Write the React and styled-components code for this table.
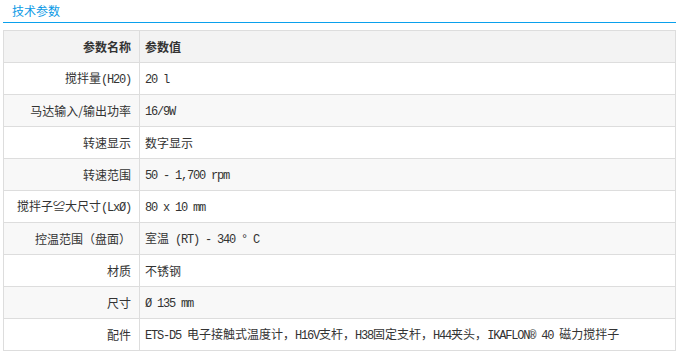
import React from 'react';
import styled, { createGlobalStyle } from 'styled-components';

const GlobalStyle = createGlobalStyle`
  body {
    margin: 0;
    background: #fff;
    font-family: "Noto Sans CJK SC", sans-serif;
    color: #333;
  }
`;

const Wrap = styled.div`
  margin: 0 6px 0 3px;
`;

const Title = styled.div`
  height: 22px;
  line-height: 22px;
  padding-left: 9px;
  font-size: 12px;
  color: #0a9ae6;
  border-bottom: 1px solid #0aa0ec;
  margin-bottom: 7px;
`;

const Table = styled.table`
  width: 100%;
  border-collapse: collapse;
  font-size: 12px;
`;

const Row = styled.tr`
  height: 32px;
  background: ${p => (p.$head ? '#f3f3f3' : p.$odd ? '#f8f8f8' : '#fff')};
`;

const Cell = styled.td`
  border: 1px solid #dddddd;
  padding: 0 8px 0 5px;
  line-height: 16px;
  white-space: nowrap;
  font-weight: ${p => (p.$head ? 'bold' : 'normal')};
  text-align: ${p => (p.$label ? 'right' : 'left')};
  width: ${p => (p.$label ? '122px' : 'auto')};
`;

// latin runs: SimSun-like half width glyphs
const L = styled.span`
  font-family: "Liberation Mono", monospace;
  font-size: 12px;
  letter-spacing: -1.2px;
`;

const rows = [
  [<>搅拌量<L>(H20)</L></>, <L>20 l</L>],
  [<>马达输入/输出功率</>, <L>16/9W</L>],
  [<>转速显示</>, <>数字显示</>],
  [<>转速范围</>, <L>50 - 1,700 rpm</L>],
  [<>搅拌子≌大尺寸<L>(LxØ)</L></>, <L>80 x 10 mm</L>],
  [<>控温范围（盘面）</>, <>室温<L> (RT) - 340 ° C</L></>],
  [<>材质</>, <>不锈钢</>],
  [<>尺寸</>, <L>Ø 135 mm</L>],
  [
    <>配件</>,
    <>
      <L>ETS-D5 </L>电子接触式温度计，<L>H16V</L>支杆，<L>H38</L>固定支杆，<L>H44</L>夹头，<L>IKAFLON® 40 </L>磁力搅拌子
    </>,
  ],
];

export default function App() {
  return (
    <Wrap>
      <GlobalStyle />
      <Title>技术参数</Title>
      <Table>
        <tbody>
          <Row $head>
            <Cell $head $label>参数名称</Cell>
            <Cell $head>参数值</Cell>
          </Row>
          {rows.map(([label, value], i) => (
            <Row key={i} $odd={i % 2 === 1}>
              <Cell $label>{label}</Cell>
              <Cell>{value}</Cell>
            </Row>
          ))}
        </tbody>
      </Table>
    </Wrap>
  );
}
